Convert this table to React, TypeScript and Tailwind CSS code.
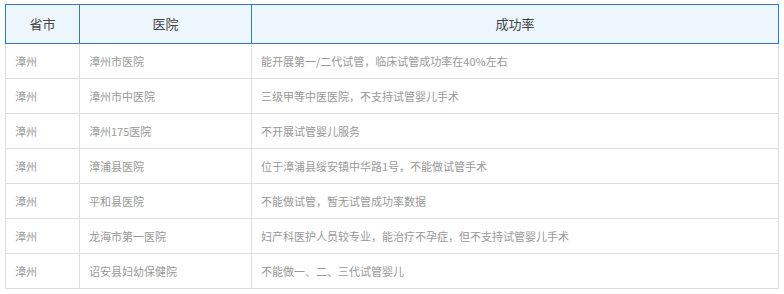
const rows = [
  { city: '漳州', hospital: '漳州市医院', rate: '能开展第一/二代试管，临床试管成功率在40%左右' },
  { city: '漳州', hospital: '漳州市中医院', rate: '三级甲等中医医院，不支持试管婴儿手术' },
  { city: '漳州', hospital: '漳州175医院', rate: '不开展试管婴儿服务' },
  { city: '漳州', hospital: '漳浦县医院', rate: '位于漳浦县绥安镇中华路1号，不能做试管手术' },
  { city: '漳州', hospital: '平和县医院', rate: '不能做试管，暂无试管成功率数据' },
  { city: '漳州', hospital: '龙海市第一医院', rate: '妇产科医护人员较专业，能治疗不孕症，但不支持试管婴儿手术' },
  { city: '漳州', hospital: '诏安县妇幼保健院', rate: '不能做一、二、三代试管婴儿' },
];

export default function App() {
  return (
    <div className="bg-white w-[784px] h-[294px] pt-[4px] pl-[5px] font-['Microsoft_YaHei','Noto_Sans_CJK_SC',sans-serif]">
      <table className="border-collapse table-fixed w-[774px]">
        <colgroup>
          <col className="w-[74px]" />
          <col className="w-[172px]" />
          <col />
        </colgroup>
        <thead>
          <tr className="h-[39px] bg-[#eef6ff]">
            {['省市', '医院', '成功率'].map((h) => (
              <th
                key={h}
                className="border border-[#2b7bd3] text-[13px] font-normal text-[#444] text-center"
              >
                {h}
              </th>
            ))}
          </tr>
        </thead>
        <tbody>
          {rows.map((r, i) => (
            <tr key={i} className="h-[35px]">
              <td className="border border-[#dddddd] px-[9px] text-[11px] text-[#999]">{r.city}</td>
              <td className="border border-[#dddddd] px-[9px] text-[11px] text-[#999]">{r.hospital}</td>
              <td className="border border-[#dddddd] px-[9px] text-[11px] text-[#999]">{r.rate}</td>
            </tr>
          ))}
        </tbody>
      </table>
    </div>
  );
}
